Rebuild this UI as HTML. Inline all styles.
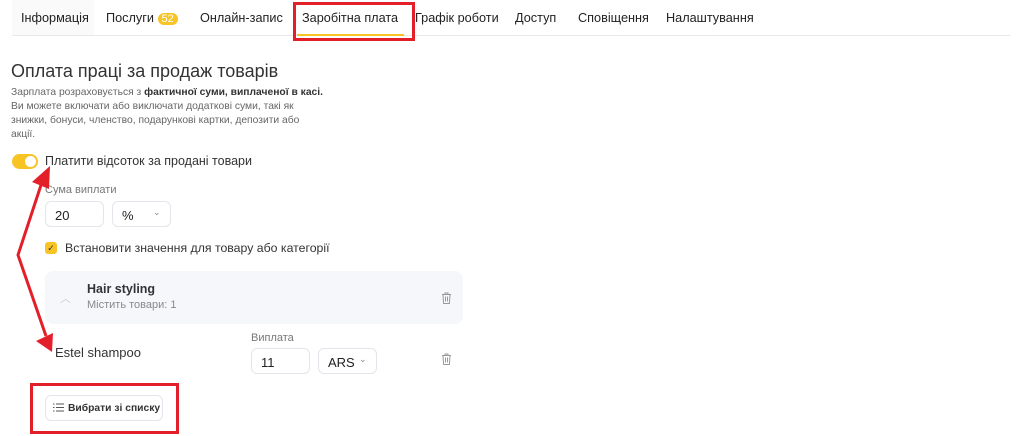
<!DOCTYPE html>
<html><head><meta charset="utf-8"><style>
*{box-sizing:border-box;margin:0;padding:0}
body{width:1024px;height:436px;background:#fff;font-family:"Liberation Sans",sans-serif;color:#222;position:relative;overflow:hidden}
.a{position:absolute;white-space:nowrap}
.tab{position:absolute;top:11px;font-size:12.7px;color:#222}
.inp{position:absolute;border:1px solid #e3e5ea;border-radius:6px;background:#fff;font-size:13px;padding:6px 0 0 9px;height:26px}
.g{color:#777}
</style></head><body>
<div class="a" style="left:12px;top:0;width:82px;height:36px;background:#fafafa"></div>
<div class="tab" style="left:21px">Інформація</div>
<div class="tab" style="left:106px">Послуги <span style="background:#f7c325;color:#fff;border-radius:8px;padding:0 4px;font-size:11px">52</span></div>
<div class="tab" style="left:200px">Онлайн-запис</div>
<div class="tab" style="left:302px">Заробітна плата</div>
<div class="tab" style="left:415px">Графік роботи</div>
<div class="tab" style="left:515px">Доступ</div>
<div class="tab" style="left:578px">Сповіщення</div>
<div class="tab" style="left:666px">Налаштування</div>
<div class="a" style="left:12px;top:35px;width:998px;height:1px;background:#e8e8e8"></div>
<div class="a" style="left:297px;top:34px;width:107px;height:2px;background:#f7c325"></div>
<div class="a" style="left:293px;top:2px;width:122px;height:39px;border:3px solid #e3202a"></div>

<div class="a" style="left:11px;top:61px;font-size:18px;color:#333">Оплата праці за продаж товарів</div>
<div class="a g" style="left:11px;top:86px;font-size:10.3px;line-height:14px;color:#666">Зарплата розраховується з <b style="color:#333">фактичної суми, виплаченої в касі.</b><br>Ви можете включати або виключати додаткові суми, такі як<br>знижки, бонуси, членство, подарункові картки, депозити або<br>акції.</div>

<div class="a" style="left:12px;top:154px;width:26px;height:15px;border-radius:8px;background:#f7c325"></div>
<div class="a" style="left:25px;top:156px;width:11px;height:11px;border-radius:50%;background:#fff"></div>
<div class="a" style="left:45px;top:154px;font-size:12.5px;color:#333">Платити відсоток за продані товари</div>

<div class="a g" style="left:45px;top:184px;font-size:11px">Сума виплати</div>
<div class="inp" style="left:45px;top:201px;width:59px">20</div>
<div class="inp" style="left:112px;top:201px;width:59px">% <span style="position:absolute;left:40px;top:5px;font-size:9px;color:#888">⌄</span></div>

<div class="a" style="left:45px;top:242px;width:12px;height:12px;border-radius:3px;background:#f7c325;color:#333;font-size:9px;text-align:center;line-height:12px">✓</div>
<div class="a" style="left:65px;top:241px;font-size:12.3px;color:#333">Встановити значення для товару або категорії</div>

<div class="a" style="left:45px;top:271px;width:418px;height:53px;border-radius:8px;background:#f5f7fb"></div>
<div class="a" style="left:60px;top:290px;font-size:11px;color:#ccc">︿</div>
<div class="a" style="left:87px;top:282px;font-size:12.5px;font-weight:bold;color:#333">Hair styling</div>
<div class="a g" style="left:87px;top:299px;font-size:11px;color:#888">Містить товари: 1</div>
<svg class="a" style="left:441px;top:292px" width="11" height="12" viewBox="0 0 11 12" fill="none" stroke="#999" stroke-width="1"><path d="M1 2.5h9M4 2.5V1h3v1.5M2 2.5l.6 9h5.8l.6-9M4.5 4.5v5M6.5 4.5v5"/></svg>

<div class="a" style="left:55px;top:345px;font-size:13px;color:#333">Estel shampoo</div>
<div class="a g" style="left:251px;top:332px;font-size:11px">Виплата</div>
<div class="inp" style="left:251px;top:348px;width:59px">11</div>
<div class="inp" style="left:318px;top:348px;width:59px">ARS <span style="position:absolute;left:40px;top:5px;font-size:9px;color:#888">⌄</span></div>
<svg class="a" style="left:441px;top:353px" width="11" height="12" viewBox="0 0 11 12" fill="none" stroke="#999" stroke-width="1"><path d="M1 2.5h9M4 2.5V1h3v1.5M2 2.5l.6 9h5.8l.6-9M4.5 4.5v5M6.5 4.5v5"/></svg>

<div class="a" style="left:45px;top:395px;width:118px;height:26px;border:1px solid #e3e5ea;border-radius:6px;font-size:10.3px;font-weight:bold;color:#333;padding:7px 0 0 22px">Вибрати зі списку</div>
<svg class="a" style="left:53px;top:403px" width="11" height="9" stroke="#555" stroke-width="1"><path d="M0 1h1.5M3 1h8M0 4.5h1.5M3 4.5h8M0 8h1.5M3 8h8"/></svg>
<div class="a" style="left:30px;top:383px;width:149px;height:51px;border:3px solid #e3202a"></div>

<svg class="a" style="left:0;top:0" width="120" height="436"><g stroke="#e3202a" stroke-width="3" fill="none"><path d="M42 182L18 255L46 336"/></g>
<polygon fill="#e3202a" points="50,166 32,182 49,189"/><polygon fill="#e3202a" points="52,352 36,341 53,333"/></svg>
</body></html>
